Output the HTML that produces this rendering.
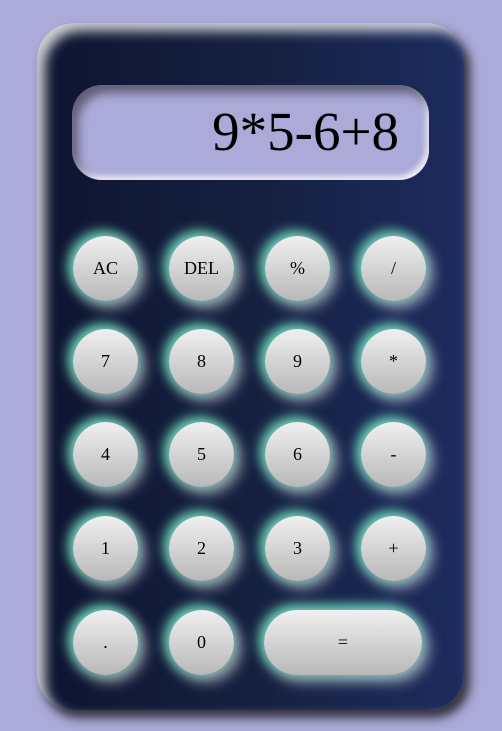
<!DOCTYPE html>
<html><head><style>
html,body{margin:0;padding:0;}
body{width:502px;height:731px;background:#abaad8;position:relative;overflow:hidden;font-family:"Liberation Serif",serif;}
.calc{position:absolute;left:37px;top:23px;width:427px;height:687px;border-radius:36px;
background:linear-gradient(90deg,#0d1430 0%,#15203f 50%,#1d2b5e 100%);
box-shadow:inset 8px 8px 12px rgba(255,255,255,0.8),6px 8px 10px rgba(0,0,0,0.7);}
.disp{position:absolute;left:72px;top:85px;width:357px;height:95px;border-radius:30px;background:#abaad8;
box-shadow:inset 6px 8px 10px rgba(0,0,0,0.45),inset -3px -4px 6px rgba(255,255,255,0.8);}
.disp span{position:absolute;right:30px;top:16px;font-size:55px;color:#000;line-height:62px;}
.b{position:absolute;width:65px;height:65px;border-radius:33px;
background:linear-gradient(180deg,#f0f0f0,#b8b8b8);
box-shadow:-3px -3px 12px 2px rgba(111,222,190,0.95),5px 5px 14px 2px rgba(255,255,255,0.55);
display:flex;align-items:center;justify-content:center;font-size:18px;color:#000;}
</style></head><body>
<div class="calc"></div>
<div class="disp"><span>9*5-6+8</span></div>
<div class="b" style="left:73px;top:236px">AC</div>
<div class="b" style="left:169px;top:236px">DEL</div>
<div class="b" style="left:265px;top:236px">%</div>
<div class="b" style="left:361px;top:236px">/</div>
<div class="b" style="left:73px;top:329px">7</div>
<div class="b" style="left:169px;top:329px">8</div>
<div class="b" style="left:265px;top:329px">9</div>
<div class="b" style="left:361px;top:329px">*</div>
<div class="b" style="left:73px;top:422px">4</div>
<div class="b" style="left:169px;top:422px">5</div>
<div class="b" style="left:265px;top:422px">6</div>
<div class="b" style="left:361px;top:422px">-</div>
<div class="b" style="left:73px;top:516px">1</div>
<div class="b" style="left:169px;top:516px">2</div>
<div class="b" style="left:265px;top:516px">3</div>
<div class="b" style="left:361px;top:516px">+</div>
<div class="b" style="left:73px;top:610px">.</div>
<div class="b" style="left:169px;top:610px">0</div>
<div class="b" style="left:264px;top:610px;width:158px">=</div>
</body></html>
